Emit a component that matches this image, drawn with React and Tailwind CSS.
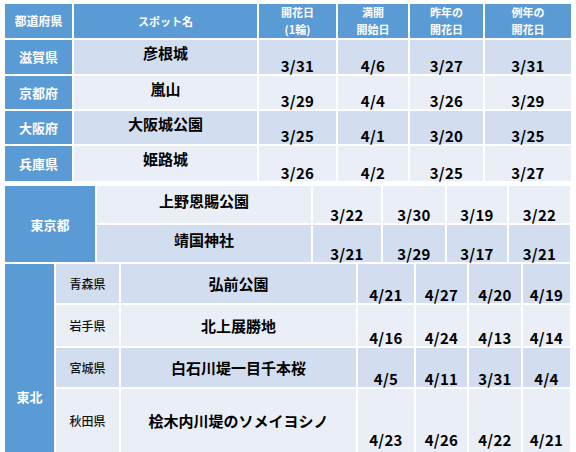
import React from "react";

const font = { fontFamily: '"Noto Sans CJK JP", "Liberation Sans", sans-serif' };

const kansai = [
  { pref: "滋賀県", spot: "彦根城", d: ["3/31", "4/6", "3/27", "3/31"] },
  { pref: "京都府", spot: "嵐山", d: ["3/29", "4/4", "3/26", "3/29"] },
  { pref: "大阪府", spot: "大阪城公園", d: ["3/25", "4/1", "3/20", "3/25"] },
  { pref: "兵庫県", spot: "姫路城", d: ["3/26", "4/2", "3/25", "3/27"] },
];

const tokyo = [
  { spot: "上野恩賜公園", d: ["3/22", "3/30", "3/19", "3/22"] },
  { spot: "靖国神社", d: ["3/21", "3/29", "3/17", "3/21"] },
];

const tohoku = [
  { pref: "青森県", spot: "弘前公園", d: ["4/21", "4/27", "4/20", "4/19"] },
  { pref: "岩手県", spot: "北上展勝地", d: ["4/16", "4/24", "4/13", "4/14"] },
  { pref: "宮城県", spot: "白石川堤一目千本桜", d: ["4/5", "4/11", "3/31", "4/4"] },
  { pref: "秋田県", spot: "桧木内川堤のソメイヨシノ", d: ["4/23", "4/26", "4/22", "4/21"] },
];

const band = (i) => (i % 2 === 0 ? "bg-[#d2deef]" : "bg-[#eaeff7]");

function DateCell({ value, bg, last }) {
  return (
    <div
      className={`${bg} ${last ? "pb-[4px]" : ""} flex items-end justify-center text-[15px] font-semibold leading-[16px] tracking-[0.3px] text-black`}
    >
      {value}
    </div>
  );
}

export default function App() {
  return (
    <div className="h-[452px] w-[576px] overflow-hidden bg-white pl-[5px] pt-[4px]" style={font}>
      {/* 関西 */}
      <div className="grid grid-cols-[67px_183px_77px_70px_73px_86px] grid-rows-[34px_34px_33px_33px_35px] gap-[2px]">
        <div className="flex items-center justify-center bg-[#5b9bd5] text-[12px] font-bold text-white">都道府県</div>
        <div className="flex items-center justify-center bg-[#5b9bd5] text-[11px] font-bold text-white">スポット名</div>
        <div className="flex flex-col items-center justify-center bg-[#5b9bd5] text-[11px] font-bold leading-[17px] text-white">
          <span>開花日</span>
          <span>(1輪)</span>
        </div>
        <div className="flex flex-col items-center justify-center bg-[#5b9bd5] text-[11px] font-bold leading-[17px] text-white">
          <span>満開</span>
          <span>開始日</span>
        </div>
        <div className="flex flex-col items-center justify-center bg-[#5b9bd5] text-[11px] font-bold leading-[17px] text-white">
          <span>昨年の</span>
          <span>開花日</span>
        </div>
        <div className="flex flex-col items-center justify-center bg-[#5b9bd5] text-[11px] font-bold leading-[17px] text-white">
          <span>例年の</span>
          <span>開花日</span>
        </div>
        {kansai.map((r, i) => (
          <React.Fragment key={r.pref}>
            <div className="flex items-center justify-center bg-[#5b9bd5] text-[13px] font-bold text-white">{r.pref}</div>
            <div className={`${band(i)} flex items-start justify-center pt-[3px] text-[15px] font-semibold leading-[20px] text-black`}>
              {r.spot}
            </div>
            {r.d.map((d, j) => (
              <DateCell key={j} value={d} bg={band(i)} />
            ))}
          </React.Fragment>
        ))}
      </div>

      {/* 東京都 */}
      <div className="mt-[5px] grid grid-cols-[90px_214px_68px_62px_60px_61px] grid-rows-[37px_37px] gap-[2px]">
        <div className="row-span-2 flex items-center justify-center bg-[#5b9bd5] pt-[2px] text-[13px] font-bold text-white">東京都</div>
        {tokyo.map((r, i) => (
          <React.Fragment key={r.spot}>
            <div className={`${band(i + 1)} flex items-start justify-center pt-[5px] text-[15px] font-semibold leading-[20px] text-black`}>
              {r.spot}
            </div>
            {r.d.map((d, j) => (
              <DateCell key={j} value={d} bg={band(i + 1)} />
            ))}
          </React.Fragment>
        ))}
      </div>

      {/* 東北 */}
      <div className="mt-[2px] grid grid-cols-[49px_63px_235px_56px_51px_52px_47px] grid-rows-[39px_41px_39px_63px] gap-[2px]">
        <div className="row-span-4 flex items-start justify-center bg-[#5b9bd5] pt-[124px] text-[13px] font-bold leading-[18px] text-white">
          東北
        </div>
        {tohoku.map((r, i) => (
          <React.Fragment key={r.pref}>
            <div className={`${band(i)} flex items-center justify-center text-[12px] font-medium text-[#111]`}>{r.pref}</div>
            <div className={`${band(i)} flex items-center justify-center text-[15px] font-semibold leading-[20px] text-black`}>
              {r.spot}
            </div>
            {r.d.map((d, j) => (
              <DateCell key={j} value={d} bg={band(i)} last={i === 3} />
            ))}
          </React.Fragment>
        ))}
      </div>
    </div>
  );
}
